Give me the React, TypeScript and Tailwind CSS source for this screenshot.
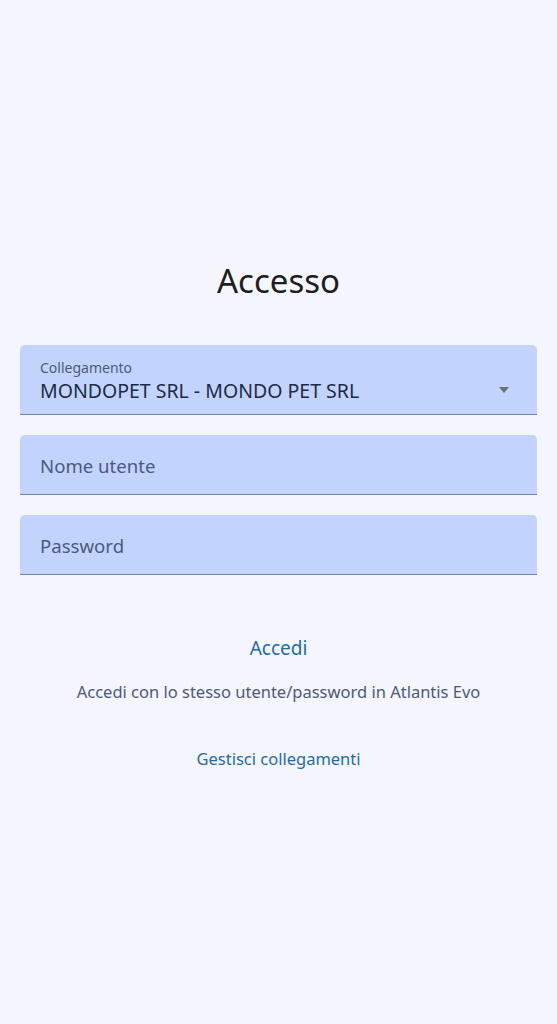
const font = { fontFamily: '"Noto Sans", "Open Sans", sans-serif' };

function Field({ placeholder }: { placeholder: string }) {
  return (
    <div className="flex h-[60px] items-center rounded-t-[5px] border-b border-[#7484a8] bg-[#c2d4fd] px-5 pt-[3px]">
      <span className="text-[18.6px] text-[#4b5a7c]">{placeholder}</span>
    </div>
  );
}

export default function App() {
  return (
    <div className="min-h-[1024px] w-full bg-[#f5f5fd]" style={font}>
      <div className="flex flex-col px-5 pt-[257px]">
        <h1 className="text-center text-[33px] leading-[48px] text-[#1d1d22]">Accesso</h1>

        <div className="mt-[40px] flex h-[70px] items-center rounded-t-[5px] border-b border-[#7484a8] bg-[#c2d4fd] px-5 pt-[3px]">
          <div className="flex flex-1 flex-col">
            <span className="text-[14px] leading-[18px] text-[#4b5a7c]">Collegamento</span>
            <span className="text-[19.5px] leading-[27px] text-[#1e2a45]">MONDOPET SRL - MONDO PET SRL</span>
          </div>
          <svg width="10" height="6" viewBox="0 0 10 6" className="mr-[8px] mt-[18px]">
            <path d="M0 0h10L5 6z" fill="#6b6e76" />
          </svg>
        </div>

        <div className="mt-[20px]">
          <Field placeholder="Nome utente" />
        </div>
        <div className="mt-[20px]">
          <Field placeholder="Password" />
        </div>

        <button type="button" className="mt-[59px] self-center text-[19px] leading-[28px] text-[#1f6bab]">
          Accedi
        </button>
        <p className="mt-[18px] text-center text-[16.5px] leading-[24px] text-[#4b5a7c]">
          Accedi con lo stesso utente/password in Atlantis Evo
        </p>
        <button type="button" className="mt-[43px] self-center text-[16.5px] leading-[24px] text-[#1f6bab]">
          Gestisci collegamenti
        </button>
      </div>
    </div>
  );
}
